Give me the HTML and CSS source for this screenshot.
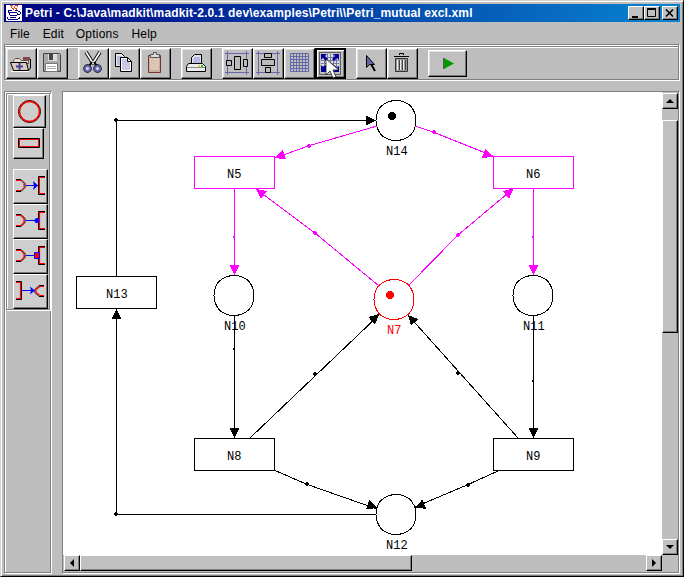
FILE: index.html
```html
<!DOCTYPE html>
<html lang="en">
<head>
<meta charset="utf-8">
<title>Petri</title>
<link rel="stylesheet" href="styles.css">
</head>
<body>
<div class="window">
<header class="titlebar">
<svg class="logo" width="16" height="16" viewBox="0 0 16 16" shape-rendering="crispEdges"><path fill="#fff" d="M0 0h16v16H0z"/><path fill="#e33" d="M4 0h3v1H4zM9 0h3v1H9zM5 1h1v2H5zM8 1h1v2H8zM11 1h1v1h-1zM6 3h2v1H6zM9 3h2v1H9zM7 4h1v1H7zM10 4h1v1h-1z"/><path fill="#008" d="M2 5h4v1H2zM9 5h3v1H9zM2 6h1v2H2zM3 7h8v1H3zM12 6h2v1h-2zM14 7h1v2h-1zM12 9h2v1h-2zM3 8h1v2H3zM11 8h1v2h-1zM4 10h7v1H4zM4 12h6v1H4zM1 12h1v2H1zM2 14h10v1H2zM12 13h2v1h-2zM13 12h1v1h-1z"/></svg>
<h1>Petri - C:\Java\madkit\madkit-2.0.1 dev\examples\Petri\\Petri_mutual excl.xml</h1>
<div class="controls">
<button class="raised ctl"><svg width="12" height="10"><path d="M2 8h6v2H2z"/></svg></button>
<button class="raised ctl"><svg width="12" height="10"><path fill="none" stroke="#000" d="M1.5 1.5h8v7h-8zM1 .5h9"/></svg></button>
<button class="raised ctl close"><svg width="12" height="10"><path fill="none" stroke="#000" stroke-width="1.6" d="M2 1.5l7 7M9 1.5l-7 7"/></svg></button>
</div>
</header>
<nav class="menu"><span>File</span><span>Edit</span><span>Options</span><span>Help</span></nav>
<div class="toolbar">
<div class="group">
<button class="tool"><svg viewBox="0 0 31 31"><path fill="#fff" d="M5 23h18v1H5z"/><path fill="#ecd9cc" stroke="#555" d="M7.500 15.500v-3l2-2h4l2 2h7v3z"/><path fill="#844" d="M17 9h7v3h-7z"/><path fill="#dcc8ba" stroke="#000" d="M4.500 14.500h16l2 8h-15z"/><path fill="none" stroke="#000" d="M24.500 11v9l-2 2.500"/><path stroke="#449" stroke-width="2" d="M10 18.500h7M13.500 15v7"/></svg></button>
<button class="tool"><svg viewBox="0 0 31 31"><path fill="#aaa" stroke="#444" d="M6.500 5.500h16l1 1v17h-17z"/><path fill="#ddd" d="M11 6h9v7h-9z"/><path fill="#444" d="M12 6h4v6h-4z"/><path fill="#fff" stroke="#777" d="M8.500 15.500h12v8h-12z"/><path stroke="#aaa" d="M10 18.500h9M10 20.500h9"/></svg></button>
</div>
<div class="group">
<button class="tool"><svg viewBox="0 0 31 31"><path fill="none" stroke="#000" stroke-width="3.500" d="M8 4l7.500 12M22 4l-7.500 12"/><path fill="none" stroke="#fff" stroke-width="1.700" d="M8 4l7.500 12M22 4l-7.500 12"/><path stroke="#000" stroke-width="2" d="M14 14l-3 4M16 14l3 4"/><g fill="#ddd"><circle cx="9.500" cy="20.500" r="3.500" stroke="#000" stroke-width="1.500"/><circle cx="19.500" cy="20.500" r="3.500" stroke="#000" stroke-width="1.500"/><circle cx="9.500" cy="20.500" r="2.500" stroke="#66b" stroke-width="2"/><circle cx="19.500" cy="20.500" r="2.500" stroke="#66b" stroke-width="2"/></g></svg></button>
<button class="tool"><svg viewBox="0 0 31 31"><path fill="#e8e8f4" stroke="#000" d="M6.500 5.500h6l3 3v10h-9z"/><path fill="#bbd" d="M8 8h5v9H8z"/><path fill="#fff" stroke="#000" d="M11.500 9.500h7l4 4v10h-11z"/><path fill="#c9c9e6" d="M13 11h5l3 4v7h-8z"/><path fill="none" stroke="#000" d="M18.500 9.500v4h4"/></svg></button>
<button class="tool"><svg viewBox="0 0 31 31"><path fill="#c9ad9b" stroke="#733" d="M8.500 7.500h12v17h-12z"/><path fill="#dec5b5" d="M10 9h9v13h-9z"/><path fill="#ddd" stroke="#555" d="M10.500 9.500v-3h3v-2h3v2h3v3z"/></svg></button>
</div>
<div class="group">
<button class="tool"><svg viewBox="0 0 31 31"><path fill="#dde" stroke="#000" d="M10.500 16.500v-7l3-3h7v10z"/><path fill="#b9b9dd" d="M13 9h6v7h-7z"/><path fill="#eee" stroke="#000" d="M7.500 15.500h14l3 3v5h-19v-5z"/><path stroke="#888" d="M6 19.500h18"/><path fill="#dd0" d="M17 17h2v2h-2z"/><path fill="#2b6" d="M20 17h2v2h-2z"/></svg></button>
</div>
<div class="group">
<button class="tool"><svg viewBox="0 0 31 31"><path stroke="#66a" d="M3 5.500h24M3 24.500h24M5.500 3v24M24.500 3v24"/><path fill="#bbb" stroke="#000" d="M4.500 12.500h5v5h-5zM12.500 8.500h6v13h-6zM21.500 11.500h4v7h-4z"/></svg></button>
<button class="tool"><svg viewBox="0 0 31 31"><path stroke="#66a" d="M3 5.500h24M3 24.500h24M5.500 3v24M24.500 3v24"/><path fill="#bbb" stroke="#000" d="M11.500 5.500h7v4h-7zM8.500 11.500h13v6h-13zM12.500 19.500h5v5h-5z"/></svg></button>
<button class="tool"><svg viewBox="0 0 31 31"><path fill="none" stroke="#66a" d="M6.500 5.500h18v18h-18zM9.500 5v19M12.500 5v19M15.500 5v19M18.500 5v19M21.500 5v19M6 8.500h19M6 11.500h19M6 14.500h19M6 17.500h19M6 20.500h19"/></svg></button>
<button class="tool active"><svg viewBox="0 0 31 31"><path fill="none" stroke="#000" stroke-dasharray="1 1" d="M4.500 4.500h21v22h-21z"/><path fill="#ddd" d="M6 6h18v18H6z"/><path stroke="#77a" d="M9.500 6v18M12.500 6v18M15.500 6v18M18.500 6v18M21.500 6v18M6 9.500h18M6 12.500h18M6 15.500h18M6 18.500h18"/><path fill="#009" d="M6 6h6l-2 2 3 3-2 2-3-3-2 2zM24 6v6l-2-2-3 3-2-2 3-3-2-2zM6 24v-7l2 2 3-2v7zM24 24v-6l-2 2-3-3-2 2 3 3-2 2z"/><path fill="#fff" stroke="#000" stroke-width=".7" d="M11 11v16l4-4 3 7 3-1-3-7h6z"/></svg></button>
</div>
<div class="group">
<button class="tool"><svg viewBox="0 0 31 31"><path stroke="#000" stroke-width="2" d="M15 16l4 7"/><path fill="#66a" stroke="#000" d="M10.500 7.500v12l3-3h5z"/></svg></button>
<button class="tool"><svg viewBox="0 0 31 31"><path fill="none" stroke="#000" d="M12.500 7v-1.500h4V7M7 8.500h15"/><path fill="#999" stroke="#333" d="M8.500 10.500h12v13h-12z"/><path stroke="#eee" d="M10.500 12v10M13.500 12v10M16.500 12v10"/><path stroke="#444" d="M12.500 12v10M15.500 12v10M18.500 12v10"/></svg></button>
</div>
<button class="tool play"><svg viewBox="0 0 39 27"><path fill="#009a00" d="M16 8l10 5.500L16 19z"/><path stroke="#555" d="M15.500 8v11"/></svg></button>
</div>
<main class="work">
<aside class="side">
<div class="palette">
<button class="item circle"><svg viewBox="0 0 33 33"><circle cx="16.500" cy="16.500" r="11" fill="none" stroke="#000"/><circle cx="16.500" cy="16.500" r="10" fill="none" stroke="#f00" stroke-width="1.500"/></svg></button>
<button class="item rect"><svg viewBox="0 0 31 31"><path fill="none" stroke="#000" d="M5.500 10.500h21v9h-21z"/><path fill="none" stroke="#f00" d="M6.500 11.500h19v7h-19z"/></svg></button>
<button class="item first"><svg viewBox="0 0 35 35"><path fill="none" stroke="#000" d="M3 10.500h5l4 4v4l-4 4H3M32 7.500h-6.500v18H32"/><path fill="none" stroke="#f00" d="M3 11.500h5l3 3v4l-3 3H3M32 8.500h-5.500v16H32"/><path stroke="#00f" d="M13 16.500h12"/><path fill="#00f" d="M20 12l5 4.500-5 4.500 1-4z"/></svg></button>
<button class="item"><svg viewBox="0 0 35 35"><path fill="none" stroke="#000" d="M3 10.500h5l4 4v4l-4 4H3M32 7.500h-6.500v18H32"/><path fill="none" stroke="#f00" stroke-width="1.200" d="M3 11.500h5l3 3v4l-3 3H3M32 8.500h-5.500v16H32"/><path stroke="#00f" d="M13 16.500h12"/><circle cx="24" cy="16.500" r="2.500" fill="#00f"/></svg></button>
<button class="item"><svg viewBox="0 0 35 35"><path fill="none" stroke="#000" d="M3 10.500h5l4 4v4l-4 4H3M32 7.500h-6.500v18H32"/><path fill="none" stroke="#f00" stroke-width="1.200" d="M3 11.500h5l3 3v4l-3 3H3M32 8.500h-5.500v16H32"/><path stroke="#00f" d="M13 16.500h12"/><path fill="#f00" stroke="#00f" d="M21.500 13.500h5v6h-5z"/></svg></button>
<button class="item"><svg viewBox="0 0 35 35"><path fill="none" stroke="#000" d="M3 7.500h5.500v18H3M31 11.500h-5l-4 4v3l4 4h5"/><path fill="none" stroke="#f00" stroke-width="1.200" d="M3 8.500h4.500v16H3M31 12.500h-4l-4 3v3l4 3h4"/><path stroke="#00f" d="M9 16.500h12"/><path fill="#00f" d="M17 12.500l5 4-5 4 1-4z"/></svg></button>
</div>
</aside>
<section class="pane">
<svg class="canvas" width="599" height="463" viewBox="63 92 599 463" shape-rendering="crispEdges">
<defs>
<path id="head" d="M0 0L-10-5V5z"/>
<path id="place" fill="#fff" d="M0-20C5-20 12-18 15-14C19-9 20-4 20 0C20 5 18 12 14 15C9 19 4 20 0 20C-5 20-12 18-15 14C-19 9-20 4-20 0C-20-5-18-12-14-15C-9-19-4-20 0-20z"/>
<path id="trans" fill="#fff" d="M0 0h80v32H0z"/>
</defs>
<g stroke="#000"><use href="#place" x="396" y="120.500"/><use href="#place" x="234" y="295.500"/><use href="#place" x="533" y="295.500"/><use href="#place" x="396" y="514.500"/><use href="#place" x="394" y="299.500" stroke="#f00"/></g>
<g stroke="#000"><use href="#trans" x="76.500" y="276.500"/><use href="#trans" x="194.500" y="438.500"/><use href="#trans" x="493.500" y="438.500"/><use href="#trans" x="194.500" y="156.500" stroke="#f0f"/><use href="#trans" x="493.500" y="156.500" stroke="#f0f"/></g>
<g fill="none" stroke="#000"><path d="M116.500 276V120.500H376M376 514.500H116.500V309M234.500 315v123M533.500 315v123M250 438L379 315M518 438L408 315M274 470l32 14 71 25M498 471l-31 14-52 22"/>
<path stroke="#f0f" d="M377 126l-69 20-33 12M415 126l18 6 60 24M234.500 188v87M533.500 188v87M379 286L315 233 256 189M408 286l50-51 55-46"/></g>
<g><use href="#head" transform="translate(376 120.500)"/><use href="#head" transform="translate(116.500 309)rotate(-90)"/><use href="#head" transform="translate(234.500 438)rotate(90)"/><use href="#head" transform="translate(533.500 438)rotate(90)"/><use href="#head" transform="translate(379 314)rotate(-43)"/><use href="#head" transform="translate(408 315)rotate(-132)"/><use href="#head" transform="translate(377 508)rotate(19)"/><use href="#head" transform="translate(415 508)rotate(157)"/></g>
<g fill="#f0f"><use href="#head" transform="translate(275 158)rotate(160)"/><use href="#head" transform="translate(493 157)rotate(22)"/><use href="#head" transform="translate(234.500 275)rotate(90)"/><use href="#head" transform="translate(533.500 275)rotate(90)"/><use href="#head" transform="translate(256 189)rotate(-143)"/><use href="#head" transform="translate(513.500 188.500)rotate(-40)"/><path d="M306 146l2.500-2.500 2.500 2.500-2.500 2.500zM431 132l2.500-2.500 2.500 2.500-2.500 2.500zM232 237l3-2.500v5zM531 237l3-2.500v5zM312 233l2.500-2.500 2.500 2.500-2.500 2.500zM455 235l2.500-2.500 2.500 2.500-2.500 2.500z"/></g>
<path d="M113 120l2.500-2.500 2.500 2.500-2.500 2.500zM113 514l2.500-2.500 2.500 2.500-2.500 2.500zM232 349l3-2.500v5zM531 381l3-2.500v5zM312 374l2.500-2.500 2.500 2.500-2.500 2.500zM455 373l2.500-2.500 2.500 2.500-2.500 2.500zM304 484l2.500-2.500 2.500 2.500-2.500 2.500zM465 485l2.500-2.500 2.500 2.500-2.500 2.500z"/>
<circle cx="392" cy="116" r="4"/><circle cx="390" cy="295" r="4" fill="#f00"/>
<g class="labels"><text x="227" y="178">N5</text><text x="526" y="178">N6</text><text x="106" y="298">N13</text><text x="227" y="460">N8</text><text x="526" y="460">N9</text><text x="386" y="155">N14</text><text x="224" y="330">N10</text><text x="523" y="330">N11</text><text x="386" y="549">N12</text><text x="387" y="334" fill="#f00">N7</text></g>
</svg>
<div class="vbar"><button class="raised arrow"><svg width="8" height="4"><path d="M4 0l4 4H0z"/></svg></button><div class="raised vthumb"></div><button class="raised arrow end"><svg width="8" height="4"><path d="M0 0h8L4 4z"/></svg></button></div>
<div class="hbar"><button class="raised arrow"><svg width="4" height="8"><path d="M4 0v8L0 4z"/></svg></button><div class="raised hthumb"></div><button class="raised arrow end"><svg width="4" height="8"><path d="M0 0l4 4-4 4z"/></svg></button></div>
</section>
</main>
</div>
</body>
</html>
```
FILE: styles.css
```css
* { box-sizing: border-box; }
body { margin: 0; background: #bebebe; font-family: "Liberation Sans", Arial, sans-serif; }
button { padding: 0; margin: 0; border-radius: 0; background: #c0c0c0; display: flex; align-items: center; justify-content: center; flex: none; }
svg { display: block; flex: none; }

.window { width: 684px; height: 577px; overflow: hidden; background: #bebebe; border: 1px solid #d4d4d4; border-right: 1px solid #000; border-bottom: 1px solid #000; padding: 3px; box-shadow: inset 1px 1px #fff, inset -1px -1px #808080; display: flex; flex-direction: column; }
.titlebar { height: 18px; flex: none; width: 676px; display: flex; align-items: center; padding: 0 2px; background: linear-gradient(90deg, #000080, #0884d0); color: #fff; }
.titlebar h1 { margin: 0 0 0 3px; font-size: 12px; line-height: 18px; font-weight: bold; white-space: pre; letter-spacing: .14px; }
.controls { display: flex; margin-left: auto; }
.raised { border: 1px solid; border-color: #fff #000 #000 #fff; box-shadow: inset -1px -1px #808080; background-color: #c0c0c0; }
.ctl { width: 16px; height: 14px; }
.close { margin-left: 2px; }
.menu { height: 22px; flex: none; display: flex; gap: 13px; padding-left: 6px; font-size: 12px; line-height: 24px; letter-spacing: .1px; }
.menu span:nth-child(3) { margin-left: -1px; letter-spacing: .2px; }

.toolbar { height: 37px; flex: none; width: 676px; border: 1px solid #808080; border-right-color: #fff; border-bottom-color: #fff; box-shadow: inset 0 -1px #808080, inset -1px 0 #808080, inset 0 1px #fff, inset 0 2px #808080, inset 0 3px #fff; padding: 3px 0 0 1px; display: flex; gap: 10px; }
.group { display: flex; }
.tool { width: 31px; height: 31px; border: 1px solid; border-color: #fff #000 #000 #fff; box-shadow: inset -1px -1px #777, inset 1px 1px #e0e0e0; }
.tool svg { width: 31px; height: 31px; margin: -1px; }
.active { border: 2px solid #000; box-shadow: inset 1px 1px #fff, inset -1px -1px #777; }
.active svg { margin: -2px; }
.play { width: 39px; height: 27px; margin-top: 2px; }
.play svg { width: 39px; height: 27px; }

.work { flex: none; height: 483px; margin-top: 10px; display: flex; }
.side { width: 48px; border: 1px solid #808080; border-right-color: #fff; border-bottom-color: #fff; box-shadow: inset -1px -1px #808080, inset 1px 1px #fff; padding: 1px; }
.palette { width: 45px; height: 218px; border: 1px solid #808080; border-right-color: #fff; border-bottom-color: #fff; box-shadow: inset -1px -1px #808080, inset 1px 1px #fff; padding: 1px 0 0 6px; }
.item { width: 35px; height: 35px; background: #cecece; border: 1px solid; border-color: #fff #000 #000 #fff; box-shadow: inset -1px -1px #777; }
.item svg { width: 35px; height: 35px; margin: -1px; }
.circle, .circle svg { width: 33px; height: 33px; }
.rect, .rect svg { width: 31px; height: 31px; }
.first { margin-top: 10px; }

.pane { width: 618px; margin-left: 10px; border: 1px solid #808080; border-right-color: #fff; border-bottom-color: #fff; box-shadow: inset -1px -1px #808080; display: grid; grid-template: 463px 17px / 599px 16px; }
.canvas { background: #fff; }
.labels { font: 12px "Liberation Mono", monospace; }
.vbar { display: flex; flex-direction: column; padding-top: 1px; }
.hbar { display: flex; padding-left: 1px; }
.arrow { width: 16px; height: 16px; }
.vthumb { width: 16px; height: 213px; margin-top: 11px; }
.hthumb { height: 16px; width: 332px; }
.vbar .end { margin-top: auto; }
.hbar .end { margin-left: auto; }
```
